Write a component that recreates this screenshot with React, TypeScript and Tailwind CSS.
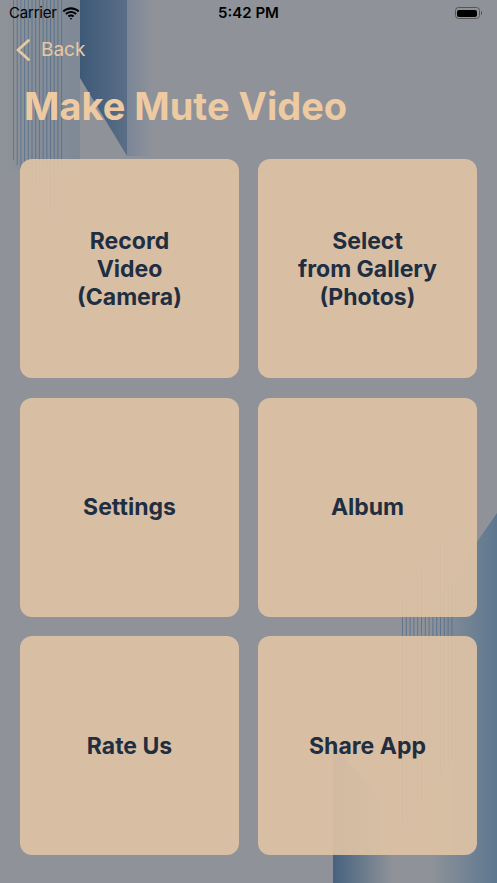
import React from "react";

const tiles = [
  ["Record", "Video", "(Camera)"],
  ["Select", "from Gallery", "(Photos)"],
  ["Settings"],
  ["Album"],
  ["Rate Us"],
  ["Share App"],
];

// staircase of thin vertical lines (x, y1, y2)
const topLines = Array.from({ length: 14 }, (_, i) => {
  const x = 13.5 + i * 3.7;
  return { x, y1: 0, y2: 160 + i * 5 };
});

const bottomLines = Array.from({ length: 14 }, (_, i) => {
  const x = 402.5 + i * 3.8;
  return { x, y1: 593 - i * 4.8, y2: 825 - i * 5 };
});

function Backdrop() {
  return (
    <div className="absolute inset-0 pointer-events-none">
      {/* top-left band */}
      <div className="absolute left-[80px] top-0 w-[47px] h-[156px] bg-gradient-to-r from-[#3e5977] to-[#5a6e86] [clip-path:polygon(0_0,100%_0,100%_100%,0_50%)]" />
      <div className="absolute left-[127px] top-0 w-[26px] h-[156px] bg-gradient-to-r from-[#7a8698] to-transparent" />
      <div className="absolute left-0 top-0 w-[80px] h-[170px] bg-gradient-to-r from-transparent to-[#6e7f92]/50" />
      {/* bottom-right shapes */}
      <div className="absolute left-[430px] top-[513px] w-[67px] h-[370px] bg-gradient-to-r from-transparent to-[#5d7790] [clip-path:polygon(100%_0,100%_100%,0_100%,0_26%)]" />
      <div className="absolute left-[333px] top-[745px] w-[60px] h-[138px] bg-gradient-to-r from-[#46627f] to-transparent [clip-path:polygon(0_0,100%_48%,100%_100%,0_100%)]" />
      <svg className="absolute inset-0" width="497" height="883">
        {topLines.map((l) => (
          <line key={l.x} x1={l.x} y1={l.y1} x2={l.x} y2={l.y2} stroke="#4f6b8a" strokeWidth="0.9" opacity="0.8" />
        ))}
        {bottomLines.map((l) => (
          <line key={l.x} x1={l.x} y1={l.y1} x2={l.x} y2={l.y2} stroke="#4f6b8a" strokeWidth="0.9" opacity="0.8" />
        ))}
      </svg>
    </div>
  );
}

function StatusBar() {
  return (
    <div className="h-[26px] flex items-center justify-between px-[9px] text-[15px] text-black">
      <div className="flex items-center gap-[5px] w-[120px]">
        <span className="tracking-[-0.2px]">Carrier</span>
        <svg width="18" height="13" viewBox="0 0 17 12">
          <path d="M8.5 2.2c2.6 0 4.9 1 6.6 2.6l1.3-1.4C14.3 1.4 11.5.2 8.5.2S2.7 1.4.6 3.4l1.3 1.4C3.6 3.2 5.9 2.2 8.5 2.2z" fill="#000" />
          <path d="M8.5 5.6c1.6 0 3.1.6 4.2 1.6l1.3-1.4C12.6 4.5 10.6 3.6 8.5 3.6S4.4 4.5 3 5.8l1.3 1.4c1.1-1 2.6-1.6 4.2-1.6z" fill="#000" />
          <path d="M8.5 8.9c.7 0 1.3.3 1.8.7l1.3-1.4c-.8-.8-1.9-1.2-3.1-1.2s-2.3.5-3.1 1.2l1.3 1.4c.5-.5 1.1-.7 1.8-.7zM8.5 12l1.2-1.3c-.3-.3-.7-.5-1.2-.5s-.9.2-1.2.5z" fill="#000" />
        </svg>
      </div>
      <span className="font-semibold">5:42 PM</span>
      <div className="w-[120px] flex justify-end pr-[6px]">
        <div className="flex items-center">
          <div className="w-[25px] h-[12px] rounded-[3.5px] border border-[#555] p-[1.5px]">
            <div className="w-full h-full bg-black rounded-[2px]" />
          </div>
          <div className="w-[1.5px] h-[4px] bg-[#555] rounded-r-sm ml-[1px]" />
        </div>
      </div>
    </div>
  );
}

export default function App() {
  return (
    <div className="relative w-[497px] h-[883px] overflow-hidden bg-[#8f9399] [font-family:Inter,'Noto_Sans',sans-serif]">
      <Backdrop />
      <div className="relative">
        <StatusBar />
        <div className="h-[48px] flex items-center pl-[15px] gap-[10px] text-[#e8c8a2]">
          <svg width="16" height="22" viewBox="0 0 16 22">
            <path d="M13.5 1.5 L3 11 L13.5 20.5" fill="none" stroke="#e8c8a2" strokeWidth="2.8" strokeLinecap="round" strokeLinejoin="round" />
          </svg>
          <span className="text-[19px]">Back</span>
        </div>
        <h1 className="mt-[9px] pl-[24px] text-[38px] leading-[46px] font-bold text-[#edcaa1]">
          Make Mute Video
        </h1>
        <div className="mt-[30px] px-[20px] grid grid-cols-2 gap-x-[19px] gap-y-[19.5px]">
          {tiles.map((lines) => (
            <button
              key={lines.join(" ")}
              type="button"
              className="h-[219px] rounded-[12px] bg-[#e0c4a5]/90 flex flex-col items-center justify-center text-[23px] leading-[28px] font-bold text-[#1f2e41]"
            >
              {lines.map((t) => (
                <span key={t}>{t}</span>
              ))}
            </button>
          ))}
        </div>
      </div>
    </div>
  );
}
